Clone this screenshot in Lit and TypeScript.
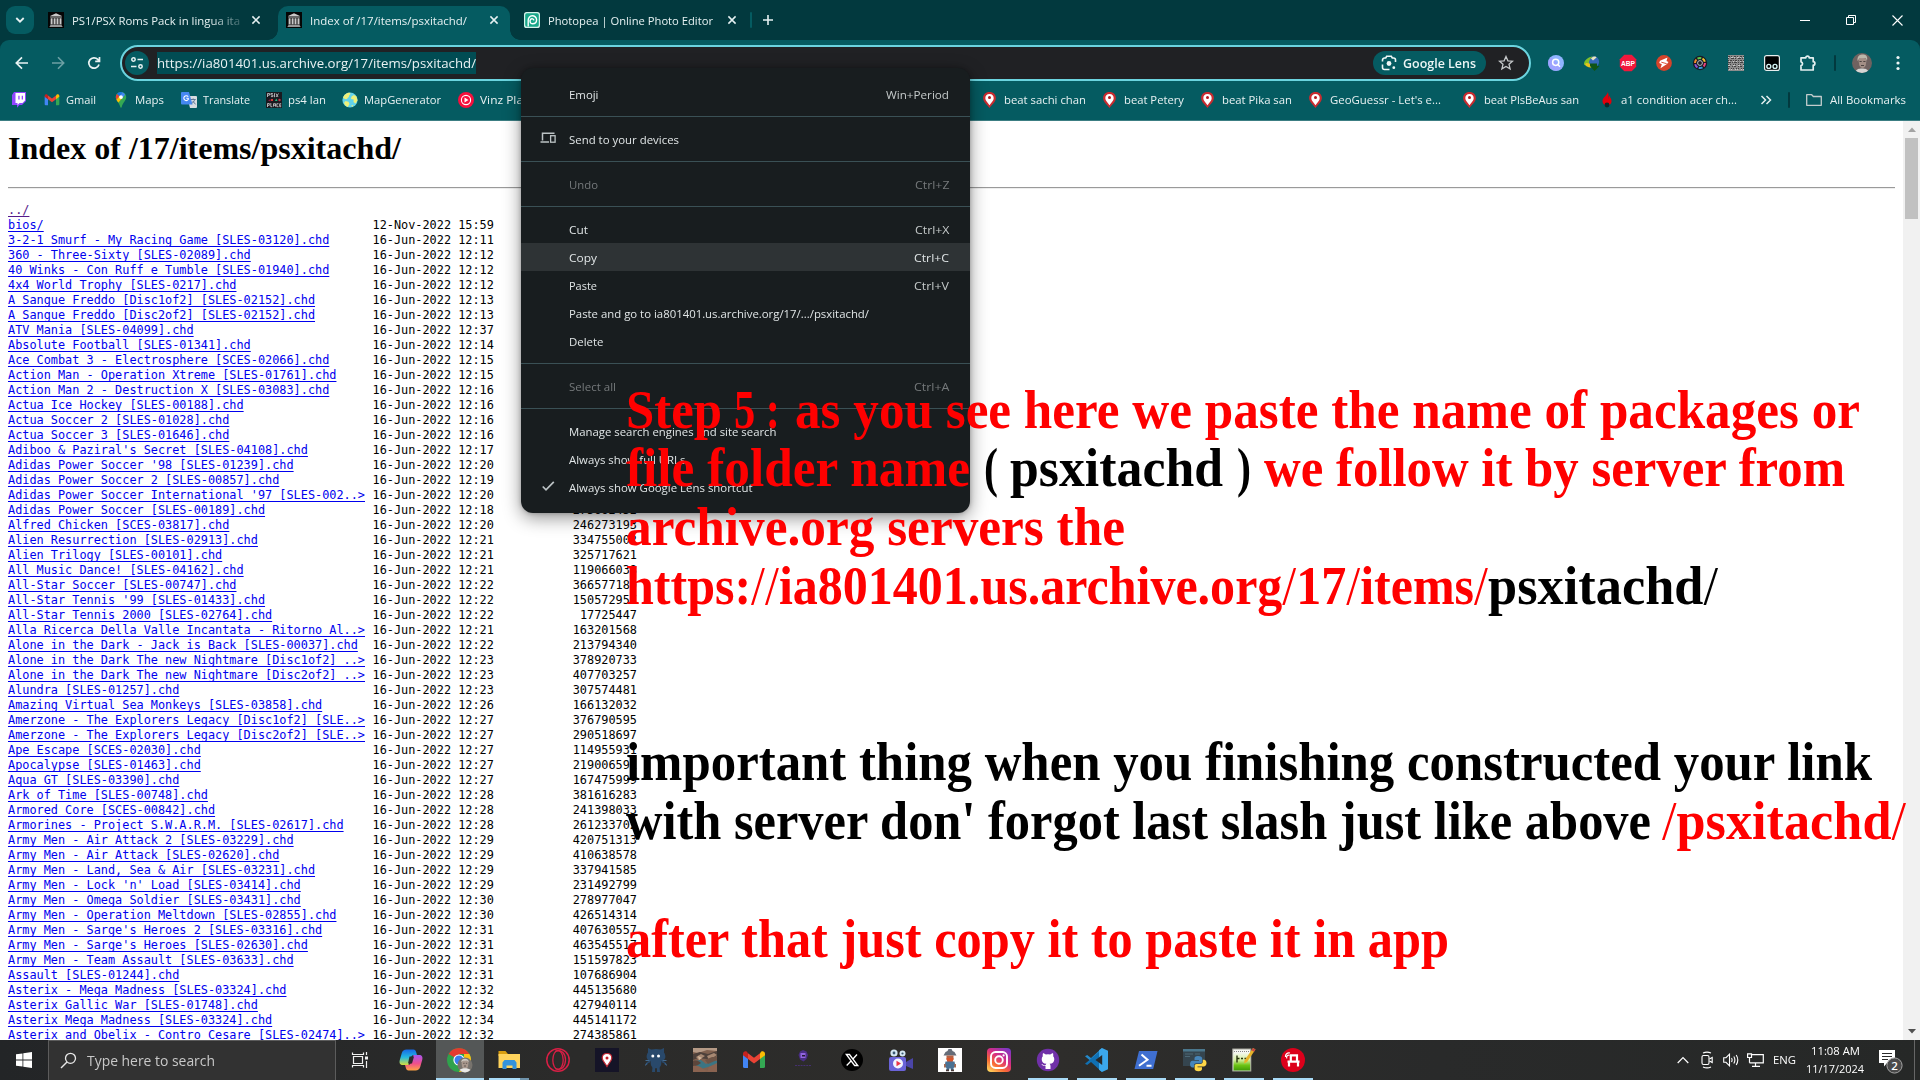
import { LitElement, html, css, nothing, TemplateResult } from "lit";
import { customElement, property, state } from "lit/decorators.js";
import { classMap } from "lit/directives/class-map.js";
import { styleMap } from "lit/directives/style-map.js";

/* Text squeezed or stretched horizontally to a given width. */
@customElement("fit-text")
export class FitText extends LitElement {
  @property({ type: Number }) w = 0;
  @state() private scale = 1;
  static styles = css`
    :host { display: block; flex: none; }
    .box { white-space: pre; overflow: visible; }
    .ink { display: inline-block; transform-origin: 0 50%; }
  `;
  firstUpdated() {
    const ink = this.renderRoot.querySelector(".ink") as HTMLElement;
    const natural = ink.offsetWidth ? ink.getBoundingClientRect().width : 0;
    if (natural > 0) this.scale = this.w / natural;
  }
  render() {
    return html`<div class="box" style=${styleMap({ width: this.w + "px" })}><span class="ink" style=${styleMap({ transform: `scaleX(${this.scale})` })}><slot></slot></span></div>`;
  }
}

const fit = (t: string, w: number) => html`<fit-text .w=${w}>${t}</fit-text>`;
/* Same, with the slashes drawn as hairlines. */
const fitNote = (t: string, w: number) =>
  html`<fit-text .w=${w}>${t.split(/(\/+)/).map((p) => (p.startsWith("/") ? html`<span class="slash">${p}</span>` : p))}</fit-text>`;

const columnsIcon = html`<svg width="16" height="16" viewBox="0 0 16 16"><rect width="16" height="16" fill="#050505"/><path d="M8 1.2 14 4H2zM2.2 4.6h11.6v1H2.2zM2.6 6.2h2v6h-2zM5.6 6.2h2v6h-2zM8.5 6.2h2v6h-2zM11.5 6.2h2v6h-2zM2.2 12.8h11.6v.9H2.2zM1.6 14.2h12.8v.9H1.6z" fill="#c9c9c9"/></svg>`;
const photopeaIcon = html`<svg width="16" height="16" viewBox="0 0 16 16"><rect width="16" height="16" rx="2.6" fill="#d5f2eb"/><rect x="1.2" y="1.2" width="13.6" height="13.6" rx="1.8" fill="#18a689"/><path d="M4.200 14.500V8.200a4.200 4.200 0 0 1 8.400-.4c0 2.400-1.800 4-4 4a2.700 2.700 0 0 1-1.900-4.500 1.900 1.900 0 0 1 3.200 1" fill="none" stroke="#fff" stroke-width="1.400"/></svg>`;
const closeIcon = html`<svg width="16" height="16" viewBox="0 0 16 16"><path d="m4.4 4.4 7.2 7.2m0-7.2-7.2 7.2" stroke="#e6f1f2" stroke-width="1.5"/></svg>`;
const pin = html`<svg width="16" height="16" viewBox="0 0 16 16"><path d="M7.500 0C3.500 0 1.100 2.700 1.100 6.100 1.100 9.500 4.500 12.400 7.500 16c3-3.600 6.400-6.500 6.400-9.900C13.900 2.700 11.500 0 7.500 0z" fill="#c92c30"/><path d="M7.500 2C4.700 2 3.300 4 3.300 6.200c0 2.200 2.200 4.300 4.200 7 2-2.700 4.200-4.800 4.200-7C11.700 4 10.300 2 7.500 2z" fill="#fff"/><circle cx="7.500" cy="5.500" r="1.500" fill="#b5161b"/></svg>`;
const gmail = (s: number) => html`<svg width=${s} height=${s} viewBox="0 0 24 24"><path d="M1 6.500V18.500a1.500 1.500 0 0 0 1.500 1.500H6V10z" fill="#4285f4"/><path d="M18 20h3.500a1.500 1.500 0 0 0 1.500-1.500V6.500L18 10z" fill="#34a853"/><path d="M18 5.300V11l5-3.800V5.700c0-2.100-2.300-3.200-3.900-2z" fill="#fbbc04"/><path d="M6 11V5.300l6 4.500 6-4.500V11l-6 4.500z" fill="#ea4335"/><path d="M1 5.700v1.500L6 11V5.300L4.900 3.700C3.300 2.500 1 3.600 1 5.700z" fill="#c5221f"/></svg>`;

const bookmarks: { icon: TemplateResult; text?: string; w?: number }[] = [
  { icon: html`<svg width="16" height="16" viewBox="0 0 16 16"><path d="M3 0h12v9l-4 4H8.500L6 15.700V13H1V3z" fill="#9146ff"/><path d="M4.500 1H14v7.500L11.500 11H8.500L6.500 13v-2H4.500z" fill="#fff"/><path d="M7.300 3.700h1.300v3.900H7.300zM10.700 3.700H12v3.900h-1.300z" fill="#9146ff"/></svg>` },
  { icon: gmail(16), text: "Gmail", w: 30 },
  { icon: html`<svg width="16" height="16" viewBox="0 0 16 16"><path d="M8 0C4.800 0 2.800 2.400 2.800 5.200c0 3.500 3.400 5 4.400 9.600.2 1.300 1.400 1.300 1.600 0C9.800 10.200 13.200 8.700 13.200 5.200 13.200 2.400 11.200 0 8 0z" fill="#34a853"/><path d="M8 0C6 0 4.700.9 3.900 2.100L6.500 4.300 9.700.3C9.200.1 8.600 0 8 0z" fill="#1a73e8"/><path d="M3.900 2.100C2.600 3.800 2.500 5.900 3.400 7.700L6.500 4.300z" fill="#ea4335"/><path d="M3.400 7.700c.5 1 1.300 1.900 2 2.900l4.200-4.900L6.500 4.300z" fill="#fbbc04"/><path d="m9.700.3-3.200 4 3.100 1.400 2.500-3C11.500 1.500 10.700.7 9.700.3z" fill="#4285f4"/><circle cx="8" cy="5.100" r="1.900" fill="#fff"/></svg>`, text: "Maps", w: 29 },
  { icon: html`<svg width="16" height="16" viewBox="0 0 16 16"><path d="M6 4h9a1 1 0 0 1 1 1v10a1 1 0 0 1-1 1H9z" fill="#d9dce0"/><path d="M1 0h7l3.500 12.500H1a1 1 0 0 1-1-1V1a1 1 0 0 1 1-1z" fill="#4688f1"/><path d="M7.600 6.300H5.300m1.900-1.500a2.400 2.400 0 1 0 .4 1.700" fill="none" stroke="#fff" stroke-width="1.100"/><path d="M9.700 7.500h5m-2.500-1v1m1.500 0c-.5 2-1.700 3-3 4m1-2.500 2.900 3.400" fill="none" stroke="#5f7796" stroke-width="1"/></svg>`, text: "Translate", w: 47 },
  { icon: html`<svg width="16" height="16" viewBox="0 0 16 16"><rect width="16" height="16" fill="#191a1f"/><path d="M1.500 5V1.500h2v1.700h-2M6.900 1.500h-2v1.500h2v1.600h-2M8.500 1.200v4M10 1.500l2 3.500m.500-3.500-2.500 3.500M1.500 15v-3.500h1.800v1.800H1.500m3.300-2.300v3.700h1.500m1.200 0v-3h2v3m-2-1.500h2m3-1.500h-1.700v3h1.700m2.700-3h-1.500v3h1.500m-1.500-1.500h1.500" fill="none" stroke="#cfcfd3" stroke-width=".8"/><path d="M2 8.500 4.500 7v2.500z" fill="#8b1b4b"/><path d="M5 7h2v2H5z" fill="#d33a3a"/><path d="m9 9 1.300-2.500L11.500 9z" fill="#1ec28b"/><circle cx="13.500" cy="8" r="1.200" fill="#c6324b"/></svg>`, text: "ps4 lan", w: 38 },
  { icon: html`<svg width="16" height="16" viewBox="0 0 16 16"><circle cx="8" cy="8" r="7.600" fill="#63d3ea"/><path d="M2.500 3C5 .7 7 .5 8.300 1c.6 1.300-.8 1.600-1.300 3 .2 1.500-1.600 1.500-1.800 3C3 7.500 1.500 6.500 1 5.500zM9.500 4.500 12 3l2.500 1.500 1 4-2 3-2-1.500.2-2.500-2.700-.5zM3.500 9l3 .7 1 2.300-1.700 3C3.500 14 2.300 12.500 2 11zM9.500 13l2 .5-1.500 1.500z" fill="#eef07a"/></svg>`, text: "MapGenerator", w: 77 },
  { icon: html`<svg width="16" height="16" viewBox="0 0 16 16"><circle cx="8" cy="8" r="8" fill="#f60f3d"/><circle cx="8" cy="8" r="4.600" fill="none" stroke="#fff" stroke-width="1.100"/><path d="m6.500 5.500 4 2.500-4 2.500z" fill="#fff"/></svg>`, text: "Vinz Playlist", w: 65 },
  { icon: pin, text: "beat sachi chan", w: 82 },
  { icon: pin, text: "beat Petery", w: 60 },
  { icon: pin, text: "beat Pika san", w: 70 },
  { icon: pin, text: "GeoGuessr - Let's e...", w: 111 },
  { icon: pin, text: "beat PlsBeAus san", w: 95 },
  { icon: html`<svg width="16" height="16" viewBox="0 0 16 16"><path d="M8.500 0c.8 2.500-4.500 5-5 8.500-.3 2.500 1.500 4 2.500 4.500h4c1.800-.7 3-2.500 2.400-5C12 5.500 10.500 6 11 3.500 9.500 4.500 9.500 6.500 9 7 9.800 4.500 10 1.500 8.500 0z" fill="#e3000b"/><circle cx="8" cy="13" r="2.400" fill="#0d2a2c"/></svg>`, text: "a1 condition acer ch...", w: 116 },
];

const extensions: TemplateResult[] = [
  html`<svg width="16" height="16" viewBox="0 0 16 16"><circle cx="8" cy="8" r="8" fill="#8fb4ff"/><path d="M0 8a8 8 0 0 0 14 5L3 2A8 8 0 0 0 0 8z" fill="#a29bff" opacity=".7"/><circle cx="7.700" cy="7.300" r="3.100" fill="none" stroke="#fff" stroke-width="1.500"/><path d="m10 9.700 2 2" stroke="#fff" stroke-width="1.500"/></svg>`,
  html`<svg width="16" height="16" viewBox="0 0 16 16"><circle cx="9.500" cy="6.800" r="5.600" fill="#3569b8"/><path d="M7 3.500c2-2.500 5-2.500 5.500-1L9 5.500z" fill="#e9e4c0"/><path d="M0 8.500C.5 5 4 2 9 1.500 6 3.500 4 6.500 5.500 9.500L3 11.500 0 9.500z" fill="#7fbf2b"/><path d="M1 9c1 2.500 3.500 4 6.500 3.500l-2-4L2.500 8z" fill="#e8c21d"/><path d="M6 8.500h7v2.500h2.500L10.500 16 6 11z" fill="#0f5417"/></svg>`,
  html`<svg width="18" height="18" viewBox="0 0 18 18"><path d="M5.300.8h7.400l4.500 4.500v7.400l-4.500 4.500H5.300L.8 12.700V5.300z" fill="#f0183c"/><text x="9" y="11.800" text-anchor="middle" font-family="Liberation Sans" font-weight="700" font-size="8" textLength="14" lengthAdjust="spacingAndGlyphs" fill="#fff">ABP</text></svg>`,
  html`<svg width="16" height="16" viewBox="0 0 16 16"><circle cx="8" cy="8" r="7.900" fill="#d6432a"/><path d="M4 5.800 11.500 2.500l-1 3.600 2 .9-1.500 2L4.500 13.300l1.300-4L3.200 8z" fill="#fff"/><path d="M5.300 7.200 10.700 8.700" stroke="#d6432a" stroke-width=".9"/></svg>`,
  html`<svg width="16" height="16" viewBox="0 0 16 16"><circle cx="8" cy="8" r="7.200" fill="#191a24"/><g fill="none" stroke-width="2" stroke-dasharray="3.800 36"><circle cx="8" cy="8" r="5" stroke="#e8427e"/><circle cx="8" cy="8" r="5" stroke="#f2c230" transform="rotate(-60 8 8)"/><circle cx="8" cy="8" r="5" stroke="#5fc949" transform="rotate(-120 8 8)"/><circle cx="8" cy="8" r="5" stroke="#2e9ce0" transform="rotate(60 8 8)"/><circle cx="8" cy="8" r="5" stroke="#8d55d8" transform="rotate(120 8 8)"/><circle cx="8" cy="8" r="5" stroke="#f58b2c" transform="rotate(180 8 8)"/></g><circle cx="8" cy="8" r="2.400" fill="#1b1d27" stroke="#b9c0c6" stroke-width="1"/></svg>`,
  html`<svg width="16" height="16" viewBox="0 0 16 16"><rect width="16" height="16" fill="#8c8c8c"/><g fill="none" stroke="#424242"><path d="M0 1.500h16" stroke-dasharray="2 1 1 2"/><path d="M0 3.500h16" stroke-dasharray="1 2 3 1"/><path d="M0 5.500h16" stroke-dasharray="1 1 2 1"/><path d="M0 7.500h16" stroke-dasharray="3 1 1 1"/><path d="M0 9.500h16" stroke-dasharray="1 1 1 2"/><path d="M0 11.500h16" stroke-dasharray="2 2 1 1"/><path d="M0 13.500h16" stroke-dasharray="1 2 1 1"/></g><g fill="none" stroke="#c8c8c8"><path d="M0 2.500h16" stroke-dasharray="1 2 2 1"/><path d="M1 6.500h15" stroke-dasharray="1 3 1 2"/><path d="M0 10.500h16" stroke-dasharray="2 3"/><path d="M1 14.500h15" stroke-dasharray="1 1 1 3"/></g></svg>`,
  html`<svg width="16" height="16" viewBox="0 0 16 16"><rect x=".6" y=".6" width="14.800" height="14.800" rx="2" fill="#000" stroke="#e7eeee" stroke-width="1.200"/><g fill="#000" stroke="#d6f4f4" stroke-width="1.400"><circle cx="4.800" cy="11.400" r="2"/><circle cx="11" cy="11.400" r="2"/></g></svg>`,
  html`<svg width="18" height="18" viewBox="0 0 18 18"><path d="M2 3.800h4.800a1.700 1.700 0 0 1 3.400 0h4V7.700a1.700 1.700 0 0 1 0 3.400V16H2v-4.300a2 2 0 0 0 0-3.900z" fill="none" stroke="#e4f0f0" stroke-width="1.700" stroke-linejoin="round"/></svg>`,
];

/* name, time stamp, byte size */
const files: [string, string, string][] = [
  ["bios/", "12-Nov-2022 15:59", ""],
  ["3-2-1 Smurf - My Racing Game [SLES-03120].chd", "12:11", ""],
  ["360 - Three-Sixty [SLES-02089].chd", "12:12", ""],
  ["40 Winks - Con Ruff e Tumble [SLES-01940].chd", "12:12", ""],
  ["4x4 World Trophy [SLES-0217].chd", "12:12", ""],
  ["A Sangue Freddo [Disc1of2] [SLES-02152].chd", "12:13", ""],
  ["A Sangue Freddo [Disc2of2] [SLES-02152].chd", "12:13", ""],
  ["ATV Mania [SLES-04099].chd", "12:37", ""],
  ["Absolute Football [SLES-01341].chd", "12:14", ""],
  ["Ace Combat 3 - Electrosphere [SCES-02066].chd", "12:15", ""],
  ["Action Man - Operation Xtreme [SLES-01761].chd", "12:15", ""],
  ["Action Man 2 - Destruction X [SLES-03083].chd", "12:16", ""],
  ["Actua Ice Hockey [SLES-00188].chd", "12:16", ""],
  ["Actua Soccer 2 [SLES-01028].chd", "12:16", ""],
  ["Actua Soccer 3 [SLES-01646].chd", "12:16", ""],
  ["Adiboo & Paziral's Secret [SLES-04108].chd", "12:17", ""],
  ["Adidas Power Soccer '98 [SLES-01239].chd", "12:20", ""],
  ["Adidas Power Soccer 2 [SLES-00857].chd", "12:19", ""],
  ["Adidas Power Soccer International '97 [SLES-002..>", "12:20", ""],
  ["Adidas Power Soccer [SLES-00189].chd", "12:18", "275662432"],
  ["Alfred Chicken [SCES-03817].chd", "12:20", "246273193"],
  ["Alien Resurrection [SLES-02913].chd", "12:21", "334755002"],
  ["Alien Trilogy [SLES-00101].chd", "12:21", "325717621"],
  ["All Music Dance! [SLES-04162].chd", "12:21", "119066038"],
  ["All-Star Soccer [SLES-00747].chd", "12:22", "366577180"],
  ["All-Star Tennis '99 [SLES-01433].chd", "12:22", "150572957"],
  ["All-Star Tennis 2000 [SLES-02764].chd", "12:22", "17725447"],
  ["Alla Ricerca Della Valle Incantata - Ritorno Al..>", "12:21", "163201568"],
  ["Alone in the Dark - Jack is Back [SLES-00037].chd", "12:22", "213794340"],
  ["Alone in the Dark The new Nightmare [Disc1of2] ..>", "12:23", "378920733"],
  ["Alone in the Dark The new Nightmare [Disc2of2] ..>", "12:23", "407703257"],
  ["Alundra [SLES-01257].chd", "12:23", "307574481"],
  ["Amazing Virtual Sea Monkeys [SLES-03858].chd", "12:26", "166132032"],
  ["Amerzone - The Explorers Legacy [Disc1of2] [SLE..>", "12:27", "376790595"],
  ["Amerzone - The Explorers Legacy [Disc2of2] [SLE..>", "12:27", "290518697"],
  ["Ape Escape [SCES-02030].chd", "12:27", "114955931"],
  ["Apocalypse [SLES-01463].chd", "12:27", "219006591"],
  ["Aqua GT [SLES-03390].chd", "12:27", "167475999"],
  ["Ark of Time [SLES-00748].chd", "12:28", "381616283"],
  ["Armored Core [SCES-00842].chd", "12:28", "241398033"],
  ["Armorines - Project S.W.A.R.M. [SLES-02617].chd", "12:28", "261233702"],
  ["Army Men - Air Attack 2 [SLES-03229].chd", "12:29", "420751313"],
  ["Army Men - Air Attack [SLES-02620].chd", "12:29", "410638578"],
  ["Army Men - Land, Sea & Air [SLES-03231].chd", "12:29", "337941585"],
  ["Army Men - Lock 'n' Load [SLES-03414].chd", "12:29", "231492799"],
  ["Army Men - Omega Soldier [SLES-03431].chd", "12:30", "278977047"],
  ["Army Men - Operation Meltdown [SLES-02855].chd", "12:30", "426514314"],
  ["Army Men - Sarge's Heroes 2 [SLES-03316].chd", "12:31", "407630557"],
  ["Army Men - Sarge's Heroes [SLES-02630].chd", "12:31", "463545517"],
  ["Army Men - Team Assault [SLES-03633].chd", "12:31", "151597823"],
  ["Assault [SLES-01244].chd", "12:31", "107686904"],
  ["Asterix - Mega Madness [SLES-03324].chd", "12:32", "445135680"],
  ["Asterix Gallic War [SLES-01748].chd", "12:34", "427940114"],
  ["Asterix Mega Madness [SLES-03324].chd", "12:34", "445141172"],
  ["Asterix and Obelix - Contro Cesare [SLES-02474]..>", "12:32", "274385861"],
];

interface MenuItem { text: string; w: number; key?: string; kw?: number; off?: boolean; hot?: boolean; icon?: TemplateResult; }
const menu: MenuItem[][] = [
  [{ text: "Emoji", w: 29.5, key: "Win+Period", kw: 63 }],
  [{ text: "Send to your devices", w: 110, icon: html`<svg width="16" height="16" viewBox="0 0 16 16"><path d="M2.500 10.500V3.200h12M.5 12H9" fill="none" stroke="#bcc3c5" stroke-width="1.500"/><rect x="10.600" y="5.700" width="4.500" height="6.500" fill="none" stroke="#bcc3c5" stroke-width="1.300"/></svg>` }],
  [{ text: "Undo", w: 29, key: "Ctrl+Z", kw: 34.5, off: true }],
  [
    { text: "Cut", w: 19, key: "Ctrl+X", kw: 34.5 },
    { text: "Copy", w: 28, key: "Ctrl+C", kw: 35, hot: true },
    { text: "Paste", w: 28, key: "Ctrl+V", kw: 35 },
    { text: "Paste and go to ia801401.us.archive.org/17/.../psxitachd/", w: 300 },
    { text: "Delete", w: 34.5 },
  ],
  [{ text: "Select all", w: 47, key: "Ctrl+A", kw: 35.5, off: true }],
  [
    { text: "Manage search engines and site search", w: 207.5 },
    { text: "Always show full URLs", w: 116.5 },
    { text: "Always show Google Lens shortcut", w: 183.5, icon: html`<svg width="16" height="16" viewBox="0 0 16 16"><path d="m2.700 8.500 3.300 3.300 7.800-8" fill="none" stroke="#bcc3c5" stroke-width="1.700"/></svg>` },
  ],
];

/* Each line is a list of [text, width, is-red, leading gap]. */
const notes: [string, number, boolean, number][][] = [
  [["Step", 96, true, 0], ["5 :", 46, true, 12], ["as you see here we paste the name of packages or", 1065, true, 15]],
  [["file folder name", 344, true, 0], ["(", 14, false, 14], ["psxitachd", 213, false, 12], [")", 14, false, 14], ["we follow it by server from", 581, true, 13]],
  [["archive.org servers the", 499, true, 0]],
  [["https://ia801401.us.archive.org/17/items/", 862, true, 0], ["psxitachd/", 230, false, 0]],
  [],
  [],
  [["important thing when you finishing constructed your link", 1246, false, 0]],
  [["with server don' forgot last slash just like above", 1025, false, 0], ["/psxitachd/", 244, true, 11]],
  [],
  [["after that just copy it to paste it in app", 823, true, 0]],
];

const apps: { icon: TemplateResult; open?: boolean; active?: boolean; stack?: boolean }[] = [
  { icon: html`<svg width="24" height="24" viewBox="0 0 24 24"><defs><linearGradient id="ca" x1="0" y1="0" x2="0" y2="1"><stop offset="0" stop-color="#1668e6"/><stop offset=".5" stop-color="#24b8e0"/><stop offset="1" stop-color="#d6dc3c"/></linearGradient><linearGradient id="cb" x1="0" y1="0" x2="0" y2="1"><stop offset="0" stop-color="#a855f0"/><stop offset=".55" stop-color="#ef4f8b"/><stop offset="1" stop-color="#ffa243"/></linearGradient></defs><path d="M7.500 1.500h7c1.500 0 2.200 1 2.600 2.500L18 7h-3c-1.800 0-2.500 1-3 2.500L9.500 17H4c-3 0-4-2-3.200-5l2-7C3.500 2.800 5 1.500 7.500 1.500z" fill="url(#ca)"/><path d="M16.500 22.500h-7c-1.500 0-2.200-1-2.600-2.500L6 17h3c1.800 0 2.500-1 3-2.500L14.500 7H20c3 0 4 2 3.200 5l-2 7c-.7 2.200-2.200 3.500-4.700 3.500z" fill="url(#cb)"/><path d="M10.500 8.500h4.500l-2 7H9z" fill="#2a2a2b"/></svg>` },
  { active: true, open: true, icon: html`<svg width="26" height="26" viewBox="0 0 26 26"><circle cx="12" cy="13" r="12" fill="#2fa24c"/><path d="M12 13 1.600 7A12 12 0 0 1 22.400 7H12z" fill="#e33b2e"/><path d="M22.400 7A12 12 0 0 1 12 25l5-9 0-9z" fill="#fbc116"/><circle cx="12" cy="13" r="5.600" fill="#fff"/><circle cx="12" cy="13" r="4.500" fill="#3b7ded"/><circle cx="18" cy="18" r="7.500" fill="#77736d"/><path d="M14.500 16c0-5 7-5 7 0l-.5 3.500c-1 3-5 3-6 0z" fill="#a8988d"/><path d="M14 15c.5-4.500 7.500-4.500 8 0l-2-1.500-4 .3z" fill="#d0cdc6"/><path d="M16.200 16.300h1.400m1.200 0h1.400M17 19h2" stroke="#4f4743" stroke-width=".8"/><path d="M12.500 23c2-2.500 9-2.500 11 0a7.500 7.500 0 0 1-11 0z" fill="#e8e8e6"/></svg>` },
  { open: true, stack: true, icon: html`<svg width="24" height="24" viewBox="0 0 24 24"><path d="M1.500 3h7l2 2.500V8h-9z" fill="#d99e10"/><path d="M1.500 6H23v14H1.500z" fill="#ffd35c"/><path d="M5.500 21v-6.500L7.500 12h10l2 2.500V21h-4v-3.500h-6V21z" fill="#3593db"/></svg>` },
  { icon: html`<svg width="24" height="24" viewBox="0 0 24 24"><g fill="none" stroke="#d81f45"><circle cx="12" cy="12" r="11.200" stroke-width="1.500"/><ellipse cx="12" cy="12" rx="5.200" ry="9.500" stroke-width="1.300"/><path d="M9 3.500c7-3 10.500 3 10.500 8.500S16 23.500 9 20.500" stroke-width="1.300"/></g></svg>` },
  { icon: html`<svg width="24" height="24" viewBox="0 0 24 24"><rect width="24" height="24" fill="#151427"/><path d="M12 5.500c-3 0-4.800 2-4.800 4.600C7.200 13 10 15 12 18.500c2-3.500 4.800-5.500 4.800-8.400C16.800 7.500 15 5.500 12 5.500z" fill="#fff" stroke="#c02631" stroke-width="1.200"/><circle cx="12" cy="10" r="1.500" fill="#c3202a"/></svg>` },
  { icon: html`<svg width="24" height="24" viewBox="0 0 24 24"><g fill="#29496b"><path d="M4 0c1 0 2 1.300 3.500 1.500 3-.7 6-.7 9 0C18 1.300 19 0 20 0v4.500c2.500 3.500 1.500 7.500-2 8.500H6C2.500 12 1.500 8 4 4.500z"/><path d="M7 13h10c1 3.500-.5 6-2.500 7.200h-5C7.500 19 6 16.500 7 13z"/><path d="M8.500 19h2.500v5H8zM13 19h2.500l.5 5h-3z"/></g><path d="M6.500 13.500c-2 0-3.500 1-4.500 3.300M17.500 13.500c2 0 3.500 1 4.500 3.300" fill="none" stroke="#29496b" stroke-width="1.700"/><path d="M1.500 12.500h4M18.500 12.500h4M2.500 15.500l-1 2M21.500 15.500l1 2" stroke="#456b8f"/><circle cx="8.800" cy="8" r="1.500" fill="#fff"/><circle cx="14.500" cy="8" r="1.500" fill="#fff"/></svg>` },
  { icon: html`<svg width="24" height="24" viewBox="0 0 24 24"><rect width="24" height="24" fill="#80614f"/><path d="M0 0h24v3L14 2 5 5 0 4z" fill="#b59a86"/><path d="M0 6 7 4l8 2 9-3v5L14 11 5 10 0 12z" fill="#4e413b"/><path d="m3 9 5-3 4 2-6 4zM14 8l7-3 3 2-8 5z" fill="#a78872"/><path d="m2 13 6-1 5 4 8-4 3 1v3l-9 3-7 2-8 1v-5z" fill="#3b7583"/><path d="M0 13c4-1 6 0 8 2l-3 2-5 2z" fill="#5c463b"/><path d="M0 18c5-1 8 1 10 3l5 2-4 1H0zM16 19l8-4v9H14z" fill="#8a6350"/><path d="M12 12l7-3 5 0v3l-9 4z" fill="#6d5446"/><path d="m5 8 4 2-3 2z" fill="#d2b79d"/></svg>` },
  { icon: gmail(24) },
  { icon: html`<svg width="24" height="24" viewBox="0 0 24 24"><path d="M9 3.500 12 2l3.500 1.500L17 7l-1.500 4-3 2.500L9 11.500 7.500 7z" fill="#4a2e86"/><path d="M9.500 5h5v5h-5z" fill="#9165de"/><path d="M11 7h3v1.500h-3z" fill="#221b33"/><path d="M4 17.500h16" stroke="#44306f" stroke-width="1.200" stroke-dasharray="2 .8"/></svg>` },
  { icon: html`<svg width="24" height="24" viewBox="0 0 24 24"><circle cx="12" cy="12" r="11" fill="#000"/><path d="M6.300 6.500h3.200l8.300 11h-3.200zM17 6.500l-4.500 5M11 13l-4.300 4.500" fill="none" stroke="#fff" stroke-width="1.300"/></svg>` },
  { icon: html`<svg width="24" height="24" viewBox="0 0 24 24"><rect y="9" width="17" height="14" rx="2" fill="#6a63d8"/><path d="m17 14 7-4v11l-7-3z" fill="#4b45a8"/><circle cx="5" cy="5" r="3.600" fill="#d5e9f3"/><circle cx="5" cy="5" r="1.400" fill="#3a5971"/><circle cx="13.500" cy="5.500" r="3" fill="#d5e9f3"/><circle cx="13.500" cy="5.500" r="1.100" fill="#3a5971"/><circle cx="9" cy="15.500" r="5" fill="#f3f5ff"/><path d="m7.500 12.800 4.500 2.700-4.500 2.700z" fill="#ec3348"/></svg>` },
  { icon: html`<svg width="24" height="24" viewBox="0 0 24 24"><rect width="24" height="24" fill="#fff"/><path d="M10.500 1h3l1 2 2 1 2 3.500h-13L7.500 4l2-1z" fill="#666d79"/><path d="M8.500 7.500h7v4l-1.500 3h-4l-1.500-3z" fill="#b86345"/><path d="M8.500 10h7l-1 4-2.500 1.500L9.500 14z" fill="#d9552b"/><path d="M7.500 13.500h9l1 5-2 1.500v2.500h-2.700v-2h-1.600v2H8.500V20l-2-1.500z" fill="#4a7193"/><path d="M6 16h1.600v3.500H6zM16.400 16H18v3.500h-1.600z" fill="#ad6a4e"/><path d="M8 21.500h3v1.700H8zM13 21.500h3v1.700h-3z" fill="#493b39"/></svg>` },
  { icon: html`<svg width="24" height="24" viewBox="0 0 24 24"><defs><linearGradient id="ig" x1=".15" y1="1" x2=".85" y2="0"><stop offset="0" stop-color="#ffd25a"/><stop offset=".3" stop-color="#f96a35"/><stop offset=".6" stop-color="#d62d83"/><stop offset="1" stop-color="#7a38c9"/></linearGradient></defs><rect width="24" height="24" rx="4" fill="url(#ig)"/><rect x="4" y="4" width="16" height="16" rx="4.500" fill="none" stroke="#fff" stroke-width="1.900"/><circle cx="12" cy="12" r="3.800" fill="none" stroke="#fff" stroke-width="1.900"/><circle cx="16.600" cy="7.400" r="1.100" fill="#fff"/></svg>` },
  { open: true, icon: html`<svg width="24" height="24" viewBox="0 0 24 24"><circle cx="12" cy="12" r="11.200" fill="#7030a8"/><path d="M9.500 21v-3c-3 .5-3.200-1.500-4.300-2 1.300-.3 2 .8 2.800 1.300.6.200 1.200 0 1.700-.2.100-.6.300-1 .7-1.300C7.300 15.500 5.700 14 5.700 11.200c0-1.200.4-2.200 1.100-3-.1-.7-.2-1.800.2-2.900 1 0 2 .7 2.700 1.200a9 9 0 0 1 4.600 0c.7-.5 1.700-1.200 2.700-1.200.4 1.100.3 2.200.2 2.900.7.800 1.100 1.800 1.100 3 0 2.800-1.600 4.300-4.700 4.600.6.500.9 1.200.9 2.200v3z" fill="#fff"/></svg>` },
  { open: true, icon: html`<svg width="24" height="24" viewBox="0 0 24 24"><path d="M17 0 6 10 2.200 7 0 8.200 14 20l3-4z" fill="#2489ca"/><path d="M17 24 6 14l-3.800 3L0 15.800 14 4l3 4z" fill="#1070b3"/><path d="m17 0 6 2.700v18.600L17 24l-3-2.200V2.200z" fill="#3ba7ec"/><path d="M17.200 7v10L10.500 12z" fill="#282829"/></svg>` },
  { open: true, icon: html`<svg width="24" height="24" viewBox="0 0 24 24"><path d="M5 3h18.500l-4.300 18H.5z" fill="#3f6fd0"/><path d="m7.500 6.500 6 5.200-8.500 6.100M12.500 17.700h5" fill="none" stroke="#fff" stroke-width="2"/></svg>` },
  { open: true, icon: html`<svg width="24" height="24" viewBox="0 0 24 24"><path d="M0 1h22v17H0z" fill="#35454f"/><path d="M0 1h22v2.500H0z" fill="#4b778d"/><path d="M2 6h8M2 8.500h5M12 6h5" stroke="#54717f" stroke-width=".8"/><path d="M15 8c-2.700 0-3.500 1-3.500 2.500V12H16v.8H9.500C7.800 12.800 7 14.500 7 16.200c0 1.900 1 3.300 2.500 3.300H11v-2c0-1.300 1-2.200 2.300-2.200h4c1 0 1.900-.8 1.900-1.900v-3C19.200 9 18 8 15 8z" fill="#4685ba"/><path d="M15.500 23.200c2.700 0 3.500-1 3.500-2.500v-1.500h-4.500v-.8H21c1.700 0 2.500-1.700 2.500-3.400 0-1.900-1-3.300-2.500-3.300h-1.200v2c0 1.300-1 2.200-2.300 2.200h-4c-1 0-1.900.8-1.900 1.900v3c0 1.400 1.200 2.400 3.900 2.400z" fill="#ffd748"/></svg>` },
  { open: true, icon: html`<svg width="24" height="24" viewBox="0 0 24 24"><defs><linearGradient id="np" x1="0" y1="0" x2="0" y2="1"><stop offset="0" stop-color="#f3f7ec"/><stop offset=".4" stop-color="#d5ee9f"/><stop offset=".7" stop-color="#6cc414"/><stop offset="1" stop-color="#3f9a08"/></linearGradient></defs><rect x=".8" y="1" width="18" height="22" fill="#f6f6f2" stroke="#a7a79d"/><path d="M1.500 5h16.700v17.500H1.500z" fill="url(#np)"/><path d="M2 3.500h16" stroke="#888" stroke-dasharray="1 1"/><path d="M5 7.500v7M9 10.500h2m1.500 0h2M5 10.500h2.500" stroke="#26330d" stroke-width="1.400"/><path d="m21 0 2.500 1.500L15 14l-3 1.500.5-3z" fill="#e6b229"/><path d="m21 0 2.500 1.500-1.500 2.300-2.500-1.600z" fill="#c84541"/></svg>` },
  { open: true, icon: html`<svg width="24" height="24" viewBox="0 0 24 24"><circle cx="12" cy="12" r="12" fill="#dc001b"/><path d="M8 18.500v-5h9v5M9.800 13V7.300h6.200V13M6.500 13.600h12" fill="none" stroke="#fff" stroke-width="2.200"/><path d="M4.500 9a3.500 3.500 0 0 1 4.500-4M6 10.500a2 2 0 0 1 2.500-3" fill="none" stroke="#fff" stroke-width="1.200"/></svg>` },
];

@customElement("app-root")
export class AppRoot extends LitElement {
  static styles = css`
    :host { display: block; width: 1920px; height: 1080px; overflow: hidden; position: relative; background: #fff; font-family: "Open Sans", "Noto Sans", sans-serif; }
    * { box-sizing: border-box; }
    svg { display: block; flex: none; }
    .screen { display: flex; flex-direction: column; width: 1920px; height: 1080px; }
    .center { display: flex; align-items: center; justify-content: center; }

    .strip { display: flex; height: 40px; background: #02393e; padding-left: 6px; align-items: flex-start; flex: none; }
    .search-tabs { width: 28px; height: 28px; margin: 6px 6px 0 0; border-radius: 9px; background: #055b61; }
    .tab { display: flex; align-items: center; gap: 8px; height: 34px; margin-top: 6px; padding-bottom: 6px; color: #e6f1f2; font-size: 11.5px; line-height: 16px; flex: none; }
    .tab fit-text { padding-top: 1px; }
    .tab .x { margin-left: auto; }
    .t1 { width: 238px; padding-left: 8px; padding-right: 14px; }
    .t1 .fade { mask-image: linear-gradient(90deg, #000 82%, rgba(0,0,0,.25)); }
    .t2 { width: 232px; padding-left: 8px; padding-right: 8px; background: #055b61; border-radius: 10px 10px 0 0; position: relative; }
    .t2::before, .t2::after { content: ""; position: absolute; bottom: 0; width: 10px; height: 10px; }
    .t2::before { left: -10px; background: radial-gradient(circle at 0 0, transparent 9.5px, #055b61 10px); }
    .t2::after { right: -10px; background: radial-gradient(circle at 100% 0, transparent 9.5px, #055b61 10px); }
    .t3 { width: 240px; padding-left: 14px; padding-right: 10px; }
    .divider { width: 2px; height: 16px; background: #055b61; border-radius: 1px; flex: none; }
    .strip .divider { margin-top: 12px; }
    .plus { width: 32px; height: 40px; }
    .win { display: flex; margin-left: auto; }
    .win div { width: 46px; height: 40px; }

    .bars { height: 81px; flex: none; background: #02393e; }
    .panel { height: 81px; background: #055b61; border-radius: 9px 9px 0 0; border-bottom: 1px solid #3c7e83; }
    .nav { display: flex; align-items: center; height: 46px; padding-left: 4px; }
    .nav .btn { width: 36px; height: 36px; flex: none; }
    .omni { display: flex; align-items: center; width: 1411px; height: 36px; margin-left: 8px; margin-right: 7px; border: 2px solid #6bd4df; border-radius: 18px; background: #202124; flex: none; }
    .chip { width: 24px; height: 24px; border-radius: 50%; background: #055b61; margin-left: 3px; }
    .url { margin-left: 8px; height: 22px; line-height: 22.5px; background: #014c53; color: #e9f2f3; font-size: 13.5px; }
    .lens { display: flex; align-items: center; gap: 6px; width: 113px; height: 24px; padding-left: 8px; margin-left: auto; border-radius: 12px; background: #055b61; color: #edf5f5; font-size: 12.5px; font-weight: 600; line-height: 18px; }
    .lens fit-text { padding-top: 1px; }
    .star { width: 40px; margin-right: 3px; }
    .nav .divider { background: #02393e; margin: 0 16px 0 8px; }
    .dots { margin-left: 16px; }

    .marks { display: grid; grid-template-columns: 33px 69px 68px 85px 76px 116px 524px 120px 98px 108px 154px 137px 161px 28px 18px auto; align-items: center; height: 28px; padding-left: 11px; color: #e8f1f2; font-size: 11.5px; line-height: 16px; }
    .mark { display: flex; align-items: center; gap: 6px; }
    .mark.all { gap: 8px; }
    .marks .divider { background: #02393e; }

    .view { display: flex; flex: none; height: 919px; }
    .page { flex: 1; min-width: 0; padding: 9px 8px 8px; overflow: hidden; color: #000; }
    h1 { margin: 0 0 20.400px; font: bold 32px/37px "Liberation Serif", serif; }
    hr { margin: 0; border: 0; height: 2px; border-top: 1px solid #9a9a9a; border-bottom: 1px solid #eeeeee; }
    .list { margin-top: 14px; font: 11.87px/15px "DejaVu Sans Mono", monospace; }
    .row { display: grid; grid-template-columns: 364.5px 122px 142.5px; height: 15px; white-space: pre; }
    .row .size { text-align: right; }
    a { color: #0000ee; text-decoration: underline; text-underline-offset: 1.5px; text-decoration-thickness: 1px; }
    a.seen { color: #551a8b; }
    .scroll { display: flex; flex-direction: column; align-items: center; width: 17px; background: #f1f1f1; }
    .scroll .arrow { height: 17px; }
    .thumb { width: 13px; height: 81px; background: #c1c1c1; }
    .scroll .down { margin-top: auto; }

    .menu { position: absolute; left: 521px; top: 68px; width: 449px; padding: 12px 0; border-radius: 12px; background: #181d1f; color: #e0e5e6; font-size: 11.5px; box-shadow: 0 5px 18px rgba(0,0,0,.42), 0 0 4px rgba(0,0,0,.25); }
    .group + .group { margin-top: 8px; padding-top: 8px; border-top: 1px solid #3a5055; }
    .item { display: flex; align-items: center; height: 28px; padding: 0 21px 0 19px; }
    .item .ico { width: 29px; flex: none; padding-bottom: 2px; }
    .item .key { margin-left: auto; color: #c5caca; }
    .item.hot { background: #2e3335; }
    .item.hot .key { color: #e0e5e6; }
    .item.off, .item.off .key { color: #75797b; }

    .notes { position: absolute; left: 626px; top: 380.5px; font: bold 54px/58.8px "Liberation Serif", serif; color: #000; }
    .line { display: flex; height: 58.8px; }
    .red { color: #ff0000; }
    .slash { font-weight: 400; }

    .task { display: flex; flex: none; height: 40px; background: linear-gradient(90deg, #232527, #2b2b2a 30%, #2e2d2b 55%, #292a2a 75%, #262827); color: #fff; }
    .start { width: 48px; }
    .find { display: flex; align-items: center; width: 288px; border: 1px solid #5c5c5c; border-bottom: 0; background: #323232; padding-left: 11px; gap: 10px; color: #c9c9c9; font-size: 14.5px; line-height: 20px; }
    .tv { width: 51px; padding-right: 3px; }
    .apps { display: flex; gap: 1px; }
    .app { position: relative; width: 48px; height: 40px; }
    .app.active { background: #545757; }
    .bar { position: absolute; bottom: 0; left: 4px; width: 40px; height: 2px; background: #a9dbf7; }
    .active .bar { left: 0; width: 48px; }
    .stack .bar { background: linear-gradient(90deg, #a9dbf7 31px, #6f93ab 31px); }
    .tray { display: flex; align-items: center; margin-left: auto; font-size: 11.5px; line-height: 18px; }
    .tray .slot { width: 24px; height: 40px; }
    .eng { margin-left: 6px; }
    .clock { display: flex; flex-direction: column; align-items: center; width: 58px; margin-left: 10px; }
    .bell { width: 30px; margin-left: 11px; height: 40px; }
    .peek { width: 6px; height: 40px; border-left: 1px solid #666; margin-left: 9px; }
  `;

  private strip() {
    return html`<div class="strip">
      <div class="search-tabs center"><svg width="16" height="16" viewBox="0 0 16 16"><path d="m4.300 6 3.700 3.700L11.700 6" fill="none" stroke="#e6f1f2" stroke-width="1.800"/></svg></div>
      <div class="tab t1">${columnsIcon}<div class="fade">${fit("PS1/PSX Roms Pack in lingua ita", 168)}</div><span class="x">${closeIcon}</span></div>
      <div class="tab t2">${columnsIcon}${fit("Index of /17/items/psxitachd/", 157)}<span class="x">${closeIcon}</span></div>
      <div class="tab t3">${photopeaIcon}${fit("Photopea | Online Photo Editor", 165)}<span class="x">${closeIcon}</span></div>
      <div class="divider"></div>
      <div class="plus center"><svg width="12" height="12" viewBox="0 0 12 12"><path d="M6 1v10M1 6h10" stroke="#e6f1f2" stroke-width="1.600"/></svg></div>
      <div class="win">
        <div class="center"><svg width="10" height="10" viewBox="0 0 10 10"><path d="M0 5.500h10" stroke="#fff"/></svg></div>
        <div class="center"><svg width="10" height="10" viewBox="0 0 10 10"><path d="M.5 2.500h7v7h-7zM2.500 2.500v-2h7v7h-2" fill="none" stroke="#fff"/></svg></div>
        <div class="center"><svg width="11" height="11" viewBox="0 0 11 11"><path d="m.5.5 10 10m0-10-10 10" stroke="#fff" stroke-width="1.100"/></svg></div>
      </div>
    </div>`;
  }

  private nav() {
    return html`<div class="nav">
      <div class="btn center"><svg width="14" height="14" viewBox="0 0 14 14"><path d="M13 7H1.500M7 1.300 1.300 7 7 12.700" fill="none" stroke="#e9f3f3" stroke-width="1.700"/></svg></div>
      <div class="btn center"><svg width="14" height="14" viewBox="0 0 14 14"><path d="M1 7h11.500M7 1.300 12.700 7 7 12.700" fill="none" stroke="#6da0a4" stroke-width="1.600"/></svg></div>
      <div class="btn center"><svg width="14" height="14" viewBox="0 0 14 14"><path d="M12 8.500A5.200 5.200 0 1 1 10.800 3.400L12.300 5M12.500 1v4.300H8.200" fill="none" stroke="#e9f3f3" stroke-width="1.700"/></svg></div>
      <div class="omni">
        <div class="chip center"><svg width="14" height="14" viewBox="0 0 14 14"><g fill="none" stroke="#e9f3f3" stroke-width="1.500"><circle cx="3.500" cy="3.500" r="1.700"/><path d="M7.500 3.500H13M1 10.500h5.500"/><circle cx="10.500" cy="10.500" r="1.700"/></g></svg></div>
        <div class="url">${fit("https://ia801401.us.archive.org/17/items/psxitachd/", 319)}</div>
        <div class="lens"><svg width="16" height="16" viewBox="0 0 16 16"><path d="M1.500 6.500V5a2 2 0 0 1 2-2h1.200l1-1.700h4.600l1 1.700h1.200a2 2 0 0 1 2 2v2M1.500 9.500v3a2 2 0 0 0 2 2h5" fill="none" stroke="#f0f7f7" stroke-width="1.600"/><circle cx="8" cy="8.500" r="2.400" fill="#f0f7f7"/><circle cx="12.800" cy="12.700" r="1.400" fill="#f0f7f7"/></svg>${fit("Google Lens", 73)}</div>
        <div class="star center"><svg width="16" height="16" viewBox="0 0 16 16"><path d="m8 1.500 1.900 4.300 4.600.4-3.500 3.100 1.100 4.600L8 11.400l-4.100 2.500L5 9.300 1.500 6.200l4.600-.4z" fill="none" stroke="#c5c8ca" stroke-width="1.300"/></svg></div>
      </div>
      ${extensions.map((e) => html`<div class="btn center">${e}</div>`)}
      <div class="divider"></div>
      <svg width="20" height="20" viewBox="0 0 20 20"><defs><clipPath id="av"><circle cx="10" cy="10" r="10"/></clipPath></defs><g clip-path="url(#av)"><rect width="20" height="20" fill="#6f6260"/><path d="M3 20c1-4 4-4.500 7-4.500s6 .5 7 4.500z" fill="#d6d6d4"/><path d="M6.500 7c0-3 8-3 8 0l-.7 5c-1 4-5.500 4-6.600 0z" fill="#a38f86"/><path d="M5.500 8C5 2.500 8 1.500 11 1.500s5 2 4 6L13.500 5l-6 .3z" fill="#bdb7ab"/><path d="M7.500 8.500h2.200m1.600 0h2.200M9 12.500h3" stroke="#4c4441"/></g></svg>
      <svg class="dots" width="20" height="16" viewBox="0 0 20 16"><g fill="#eef6f6"><circle cx="10" cy="2.500" r="1.600"/><circle cx="10" cy="8" r="1.600"/><circle cx="10" cy="13.500" r="1.600"/></g></svg>
    </div>`;
  }

  private marks() {
    return html`<div class="marks">
      ${bookmarks.map((b) => html`<div class="mark">${b.icon}${b.text ? fit(b.text, b.w!) : nothing}</div>`)}
      <svg width="12" height="12" viewBox="0 0 12 12"><path d="m1.500 2 4 4-4 4m5-8 4 4-4 4" fill="none" stroke="#e4f0f0" stroke-width="1.500"/></svg>
      <div class="divider"></div>
      <div class="mark all"><svg width="16" height="14" viewBox="0 0 16 14"><path d="M.7 12.300V1.700h5l1.600 1.800h8v8.800z" fill="none" stroke="#c2cccc" stroke-width="1.300" stroke-linejoin="round"/></svg>${fit("All Bookmarks", 76)}</div>
    </div>`;
  }

  private listing() {
    return html`<div class="view">
      <div class="page">
        <h1>Index of /17/items/psxitachd/</h1>
        <hr />
        <div class="list">
          <div class="row"><span><a class="seen">../</a></span></div>
          ${files.map(([n, t, s]) => html`<div class="row"><span><a>${n}</a></span><span>${t.length > 5 ? t : "16-Jun-2022 " + t}</span><span class="size">${s}</span></div>`)}
        </div>
      </div>
      <div class="scroll">
        <div class="arrow center"><svg width="8" height="5" viewBox="0 0 8 5"><path d="M0 5 4 .5 8 5z" fill="#a3a3a3"/></svg></div>
        <div class="thumb"></div>
        <div class="arrow center down"><svg width="8" height="5" viewBox="0 0 8 5"><path d="M0 0h8L4 4.500z" fill="#505050"/></svg></div>
      </div>
    </div>`;
  }

  private taskbar() {
    return html`<div class="task">
      <div class="start center"><svg width="16" height="16" viewBox="0 0 16 16"><path d="M0 2.300 6.500 1.400v6.200H0zM7.300 1.300 16 0v7.600H7.300zM0 8.400h6.500v6.200L0 13.700zM7.300 8.400H16V16l-8.700-1.300z" fill="#fff"/></svg></div>
      <div class="find"><svg width="17" height="17" viewBox="0 0 17 17"><circle cx="10.500" cy="6.300" r="5" fill="none" stroke="#e8e8e8" stroke-width="1.300"/><path d="M7 10 1 16" stroke="#e8e8e8" stroke-width="1.400"/></svg>${fit("Type here to search", 128)}</div>
      <div class="tv center"><svg width="18" height="16" viewBox="0 0 18 16"><path d="M2.500 4.500h9v7h-9zM1.500.500V2.500h11V.500M1.500 15.500v-2h11v2M15.500 0v3M15.500 9v7" fill="none" stroke="#f0f0f0" stroke-width="1.200"/><path d="M14 4.500h3v3h-3z" fill="#f0f0f0"/></svg></div>
      <div class="apps">${apps.map((a) => html`<div class=${classMap({ app: true, center: true, active: !!a.active, stack: !!a.stack })}>${a.icon}${a.open ? html`<div class="bar"></div>` : nothing}</div>`)}</div>
      <div class="tray">
        <div class="slot center"><svg width="12" height="8" viewBox="0 0 12 8"><path d="m.7 7 5.300-5.500L11.300 7" fill="none" stroke="#fff" stroke-width="1.200"/></svg></div>
        <div class="slot center"><svg width="14" height="18" viewBox="0 0 14 18"><g fill="none" stroke="#fff" stroke-width="1.100"><rect x="2" y="4.500" width="7" height="9" rx="1.500"/><path d="m9.500 8 2.700-1.500v5L9.500 10M3 2Q7 .2 11 2M3 16q4 1.800 8 0"/></g></svg></div>
        <div class="slot center"><svg width="17" height="14" viewBox="0 0 17 14"><path d="M.7 4.700h2.300L6.500 1.200v11.600L3 9.300H.7zM8.500 5q1.200 2 0 4M10.800 3.500q2.200 3.500 0 7M13.200 2q3.200 5 0 10" fill="none" stroke="#fff" stroke-width="1.100"/></svg></div>
        <div class="slot center"><svg width="17" height="14" viewBox="0 0 17 14"><path d="M4.500 2.500V.8H.6v3.700h3.900zM2.500 4.500v5.300M5 1.600h11.300v8.200H2.500M8.500 10v3M5 13.300h8" fill="none" stroke="#fff" stroke-width="1.200"/></svg></div>
        <div class="eng">${fit("ENG", 23)}</div>
        <div class="clock">${fit("11:08 AM", 49)}${fit("11/17/2024", 58)}</div>
        <div class="bell center"><svg width="28" height="28" viewBox="0 0 28 28"><path d="M3 4h16v13H11l-3 3.500V17H3z" fill="#fff"/><path d="M6 7.500h10M6 10.500h10M6 13.500h6" stroke="#2a2a2a" stroke-width="1.200"/><circle cx="18.500" cy="19.500" r="7.600" fill="#4a4a4a" stroke="#a5a5a5"/><text x="18.500" y="23.500" text-anchor="middle" font-size="11.500" font-weight="600" fill="#fff">2</text></svg></div>
        <div class="peek"></div>
      </div>
    </div>`;
  }

  private contextMenu() {
    return html`<div class="menu">${menu.map((g) => html`<div class="group">${g.map((m) => html`<div class=${classMap({ item: true, off: !!m.off, hot: !!m.hot })}>
      <div class="ico">${m.icon ?? nothing}</div>${fit(m.text, m.w)}${m.key ? html`<div class="key">${fit(m.key, m.kw!)}</div>` : nothing}
    </div>`)}</div>`)}</div>`;
  }

  render() {
    return html`
      <div class="screen">
        ${this.strip()}
        <div class="bars"><div class="panel">${this.nav()}${this.marks()}</div></div>
        ${this.listing()}
        ${this.taskbar()}
      </div>
      ${this.contextMenu()}
      <div class="notes">${notes.map((l) => html`<div class="line">${l.map(([t, w, r, g]) => html`<div class=${classMap({ red: r })} style=${styleMap({ marginLeft: g + "px" })}>${fitNote(t, w)}</div>`)}</div>`)}</div>
    `;
  }
}
